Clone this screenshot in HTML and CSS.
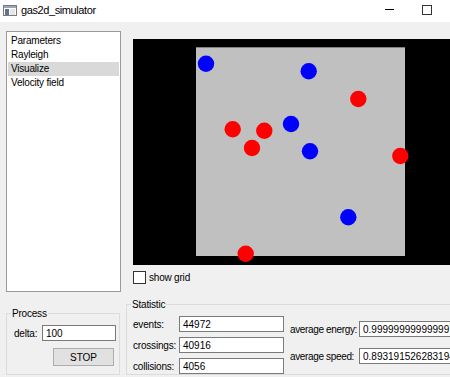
FILE: index.html
```
<!DOCTYPE html>
<html lang="en">
<head>
    <meta charset="UTF-8">
    <meta name="viewport" content="width=device-width, initial-scale=1.0">
    <title>gas2d_simulator</title>
    <link rel="stylesheet" href="styles.css">
</head>
<body>
    <div class="window">
      <header class="titlebar">
        <svg class="titlebar-icon" width="14" height="11" viewBox="0 0 14 11">
          <rect x="0.5" y="0.5" width="13" height="10" fill="#ffffff" stroke="#7a7a7a"/>
          <rect x="1" y="1" width="12" height="2" fill="#9aa6b4"/>
          <rect x="2" y="4" width="4" height="6" fill="#5f7590"/>
          <rect x="7" y="4" width="5" height="6" fill="#e6e6e6"/>
        </svg>
        <span class="titlebar-title">gas2d_simulator</span>
        <span class="titlebar-button titlebar-button--min"></span>
        <span class="titlebar-button titlebar-button--max"></span>
        <span class="titlebar-button titlebar-button--close"></span>
      </header>

      <div class="client">
        <div class="side">
          <ul class="pages">
            <li class="pages-item">Parameters</li>
            <li class="pages-item">Rayleigh</li>
            <li class="pages-item pages-item--current">Visualize</li>
            <li class="pages-item">Velocity field</li>
          </ul>

          <fieldset class="group group--process">
            <legend class="group-title">Process</legend>
            <div class="form-row">
              <label class="form-label" for="delta">delta:</label>
              <input class="field field--delta" id="delta" type="text" value="100">
            </div>
            <button class="button" type="button">STOP</button>
          </fieldset>
        </div>

        <div class="content">
          <div class="view">
            <svg width="335" height="226" viewBox="0 0 335 226">
              <rect x="0" y="0" width="335" height="226" fill="#000000"/>
              <rect x="63" y="8" width="209" height="209" fill="#c0c0c0"/>
              <line x1="63" y1="8.5" x2="272" y2="8.5" stroke="#808080"/>
              <g fill="#0000ff">
                <circle cx="73" cy="24.7" r="8.2"/>
                <circle cx="175.7" cy="32.3" r="8.2"/>
                <circle cx="158" cy="85" r="8.2"/>
                <circle cx="177" cy="112.3" r="8.2"/>
                <circle cx="215.3" cy="178.3" r="8.2"/>
              </g>
              <g fill="#ff0000">
                <circle cx="225.3" cy="60" r="8.2"/>
                <circle cx="99.7" cy="90.3" r="8.2"/>
                <circle cx="131.3" cy="91.7" r="8.2"/>
                <circle cx="119" cy="109" r="8.2"/>
                <circle cx="267.3" cy="117" r="8.2"/>
                <circle cx="112.7" cy="214.7" r="8.2"/>
              </g>
            </svg>
          </div>

          <label class="check">
            <span class="check-box"></span>
            <span class="check-text">show grid</span>
          </label>

          <fieldset class="group group--statistic">
            <legend class="group-title">Statistic</legend>
            <div class="stats">
              <div class="stats-form stats-form--counts">
                <span class="form-label">events:</span>
                <input class="field" type="text" value="44972">
                <span class="form-label">crossings:</span>
                <input class="field" type="text" value="40916">
                <span class="form-label">collisions:</span>
                <input class="field" type="text" value="4056">
              </div>
              <div class="stats-form stats-form--averages">
                <span class="form-label">average energy:</span>
                <input class="field" type="text" value="0.9999999999999978">
                <span class="form-label">average speed:</span>
                <input class="field" type="text" value="0.8931915262831944">
              </div>
            </div>
          </fieldset>
        </div>
      </div>
    </div>
</body>
</html>
```

FILE: styles.css
```
html,
body {
  height: 100%;
  overflow: hidden;
}

body {
  margin: 0;
  padding: 0;
  font-size: 10px;
  line-height: 13px;
  letter-spacing: -0.2px;
  font-family: "Liberation Sans", Arial, sans-serif;
  color: #000000;
  background-color: #f0f0f0;
  white-space: nowrap;
}

.window {
  width: 482px;
  height: 400px;
  background-color: #f0f0f0;
}

/* title bar */

.titlebar {
  display: flex;
  align-items: center;
  height: 22px;
  background-color: #ffffff;
}

.titlebar-icon {
  flex-shrink: 0;
  margin: 0 4px 1px 3px;
}

.titlebar-title {
  flex-grow: 1;
  font-size: 11px;
  letter-spacing: -0.4px;
  margin-bottom: 2px;
}

.titlebar-button {
  position: relative;
  flex-shrink: 0;
  width: 37px;
  height: 22px;
}

.titlebar-button--min::before {
  content: "";
  position: absolute;
  left: 14px;
  top: 9px;
  width: 9px;
  height: 1px;
  background-color: #000000;
}

.titlebar-button--max::before {
  content: "";
  position: absolute;
  left: 14px;
  top: 5px;
  width: 8px;
  height: 8px;
  border: 1px solid #333333;
}

/* client area */

.client {
  display: flex;
  padding: 9px 0 0 6px;
}

.side {
  display: flex;
  flex-direction: column;
  flex-shrink: 0;
  width: 115px;
}

.pages {
  box-sizing: border-box;
  height: 261px;
  margin: 0;
  padding: 2px 1px;
  list-style: none;
  background-color: #ffffff;
  border: 1px solid #9a9a9a;
}

.pages-item {
  height: 14px;
  padding-left: 3px;
  line-height: 14px;
}

.pages-item--current {
  background-color: #d9d9d9;
}

.content {
  display: flex;
  flex-direction: column;
  flex-grow: 1;
  min-width: 0;
  padding-top: 8px;
  margin-left: 5px;
}

.view {
  height: 226px;
  margin-left: 7px;
  overflow: hidden;
}

.view svg {
  display: block;
}

.check {
  display: flex;
  align-items: center;
  margin: 6px 0 0 7px;
}

.check-box {
  box-sizing: border-box;
  width: 13px;
  height: 13px;
  margin-right: 3px;
  background-color: #ffffff;
  border: 1px solid #333333;
}

.check-text {
  margin-top: -1px;
}

/* group boxes */

.group {
  min-width: 0;
  margin: 0;
  border: 1px solid #dcdcdc;
}

.group-title {
  margin-left: -3px;
  padding: 0 1px;
}

.group--process {
  box-sizing: border-box;
  display: flex;
  flex-direction: column;
  width: 114px;
  height: 68px;
  margin-top: 15px;
  padding: 5px 3px 0 7px;
}

.group--statistic {
  margin-top: 14px;
  padding: 5px 0 0 6px;
}

.group--statistic .group-title {
  margin-left: -2px;
}

.form-row {
  display: flex;
  align-items: center;
}

.form-row .form-label {
  flex-shrink: 0;
  width: 28px;
}

.field {
  box-sizing: border-box;
  width: 100%;
  height: 16px;
  margin: 0;
  padding: 1px 3px 0;
  font: inherit;
  color: #000000;
  background-color: #ffffff;
  border: 1px solid #7a7a7a;
  border-radius: 0;
  outline: none;
}

.field--delta {
  flex-grow: 1;
  width: 0;
  min-width: 0;
}

.button {
  align-self: flex-end;
  box-sizing: border-box;
  width: 61px;
  height: 18px;
  margin: 7px 2px 0 0;
  padding: 0;
  font: inherit;
  color: #000000;
  background-color: #e1e1e1;
  border: 1px solid #adadad;
  border-radius: 0;
}

.stats {
  display: flex;
  align-items: flex-start;
}

.stats-form {
  display: grid;
  align-items: center;
}

.stats-form--counts {
  grid-template-columns: 46px 105px;
  row-gap: 5px;
}

.stats-form--averages {
  grid-template-columns: 69px 130px;
  row-gap: 11px;
  margin: 5px 0 0 6px;
}

.stats-form--averages .form-label {
  letter-spacing: -0.35px;
}
```
